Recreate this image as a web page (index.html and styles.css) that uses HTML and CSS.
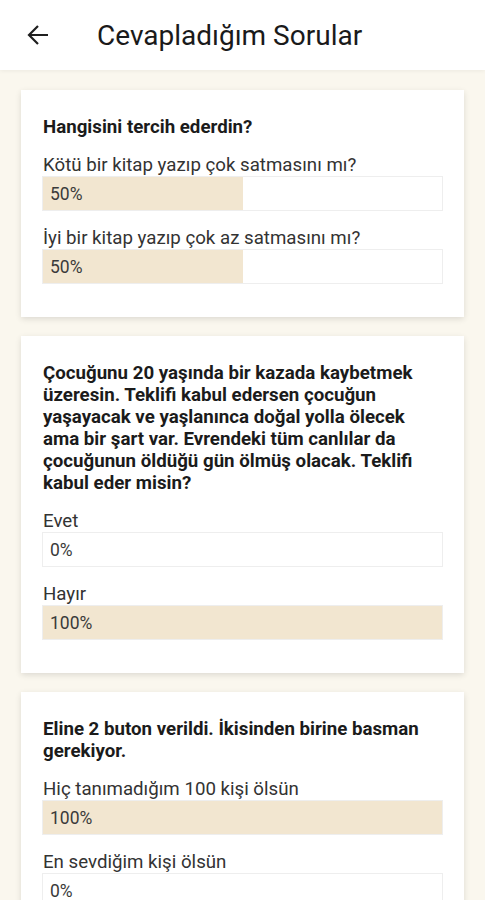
FILE: index.html
```html
<!DOCTYPE html>
<html>
<head>
    <title>Cevapladığım Sorular</title>
    <link rel="stylesheet" href="styles.css">
</head>
<body>
    <header class="app-bar">
        <svg class="back-icon" width="22" height="22" viewBox="0 0 22 22">
            <path d="M21 11H2M11 2L2 11l9 9" fill="none" stroke="#1f1f1f" stroke-width="2.2"/>
        </svg>
        <h1>Cevapladığım Sorular</h1>
    </header>

    <main class="question-list">
        <div class="card">
            <p class="question">Hangisini tercih ederdin?</p>
            <div class="option">
                <div class="option-label">Kötü bir kitap yazıp çok satmasını mı?</div>
                <div class="bar"><div class="fill" style="width: 50%"></div><span>50%</span></div>
            </div>
            <div class="option">
                <div class="option-label">İyi bir kitap yazıp çok az satmasını mı?</div>
                <div class="bar"><div class="fill" style="width: 50%"></div><span>50%</span></div>
            </div>
        </div>

        <div class="card">
            <p class="question">Çocuğunu 20 yaşında bir kazada kaybetmek üzeresin. Teklifi kabul edersen çocuğun yaşayacak ve yaşlanınca doğal yolla ölecek ama bir şart var. Evrendeki tüm canlılar da çocuğunun öldüğü gün ölmüş olacak. Teklifi kabul eder misin?</p>
            <div class="option">
                <div class="option-label">Evet</div>
                <div class="bar"><div class="fill" style="width: 0%"></div><span>0%</span></div>
            </div>
            <div class="option">
                <div class="option-label">Hayır</div>
                <div class="bar"><div class="fill" style="width: 100%"></div><span>100%</span></div>
            </div>
        </div>

        <div class="card">
            <p class="question">Eline 2 buton verildi. İkisinden birine basman gerekiyor.</p>
            <div class="option">
                <div class="option-label">Hiç tanımadığım 100 kişi ölsün</div>
                <div class="bar"><div class="fill" style="width: 100%"></div><span>100%</span></div>
            </div>
            <div class="option">
                <div class="option-label">En sevdiğim kişi ölsün</div>
                <div class="bar"><div class="fill" style="width: 0%"></div><span>0%</span></div>
            </div>
        </div>
    </main>
</body>
</html>
```

FILE: styles.css
```css
body {
    margin: 0;
    font-family: Roboto, "Noto Sans", sans-serif;
    background-color: #faf7ee;
    color: #222;
}
.app-bar {
    height: 70px;
    background: white;
    display: flex;
    align-items: center;
    padding-left: 27px;
    box-shadow: 0 1px 4px rgba(0,0,0,0.06);
}
.back-icon {
    flex-shrink: 0;
}
.app-bar h1 {
    margin: 0 0 0 48px;
    font-size: 28px;
    font-weight: 400;
    color: #1a1a1a;
}
.question-list {
    padding: 20px 21px;
    display: flex;
    flex-direction: column;
    gap: 19px;
}
.card {
    background: white;
    padding: 26px 21px 33px;
    box-shadow: 0 2px 6px rgba(0,0,0,0.12);
}
.question {
    margin: 0 0 0 1px;
    font-size: 18.7px;
    font-weight: 700;
    line-height: 22px;
    color: #1b1b1b;
}
.option {
    margin-top: 16px;
}
.option-label {
    font-size: 18.7px;
    line-height: 22px;
    color: #333;
    margin-left: 1px;
}
.bar {
    position: relative;
    height: 35px;
    border: 1px solid #eeeeee;
    box-sizing: border-box;
    display: flex;
    align-items: center;
}
.fill {
    position: absolute;
    left: 0;
    top: 0;
    bottom: 0;
    background: #f2e6d0;
}
.bar span {
    position: relative;
    padding-left: 7px;
    font-size: 17.5px;
    color: #3a3a3a;
}
```
